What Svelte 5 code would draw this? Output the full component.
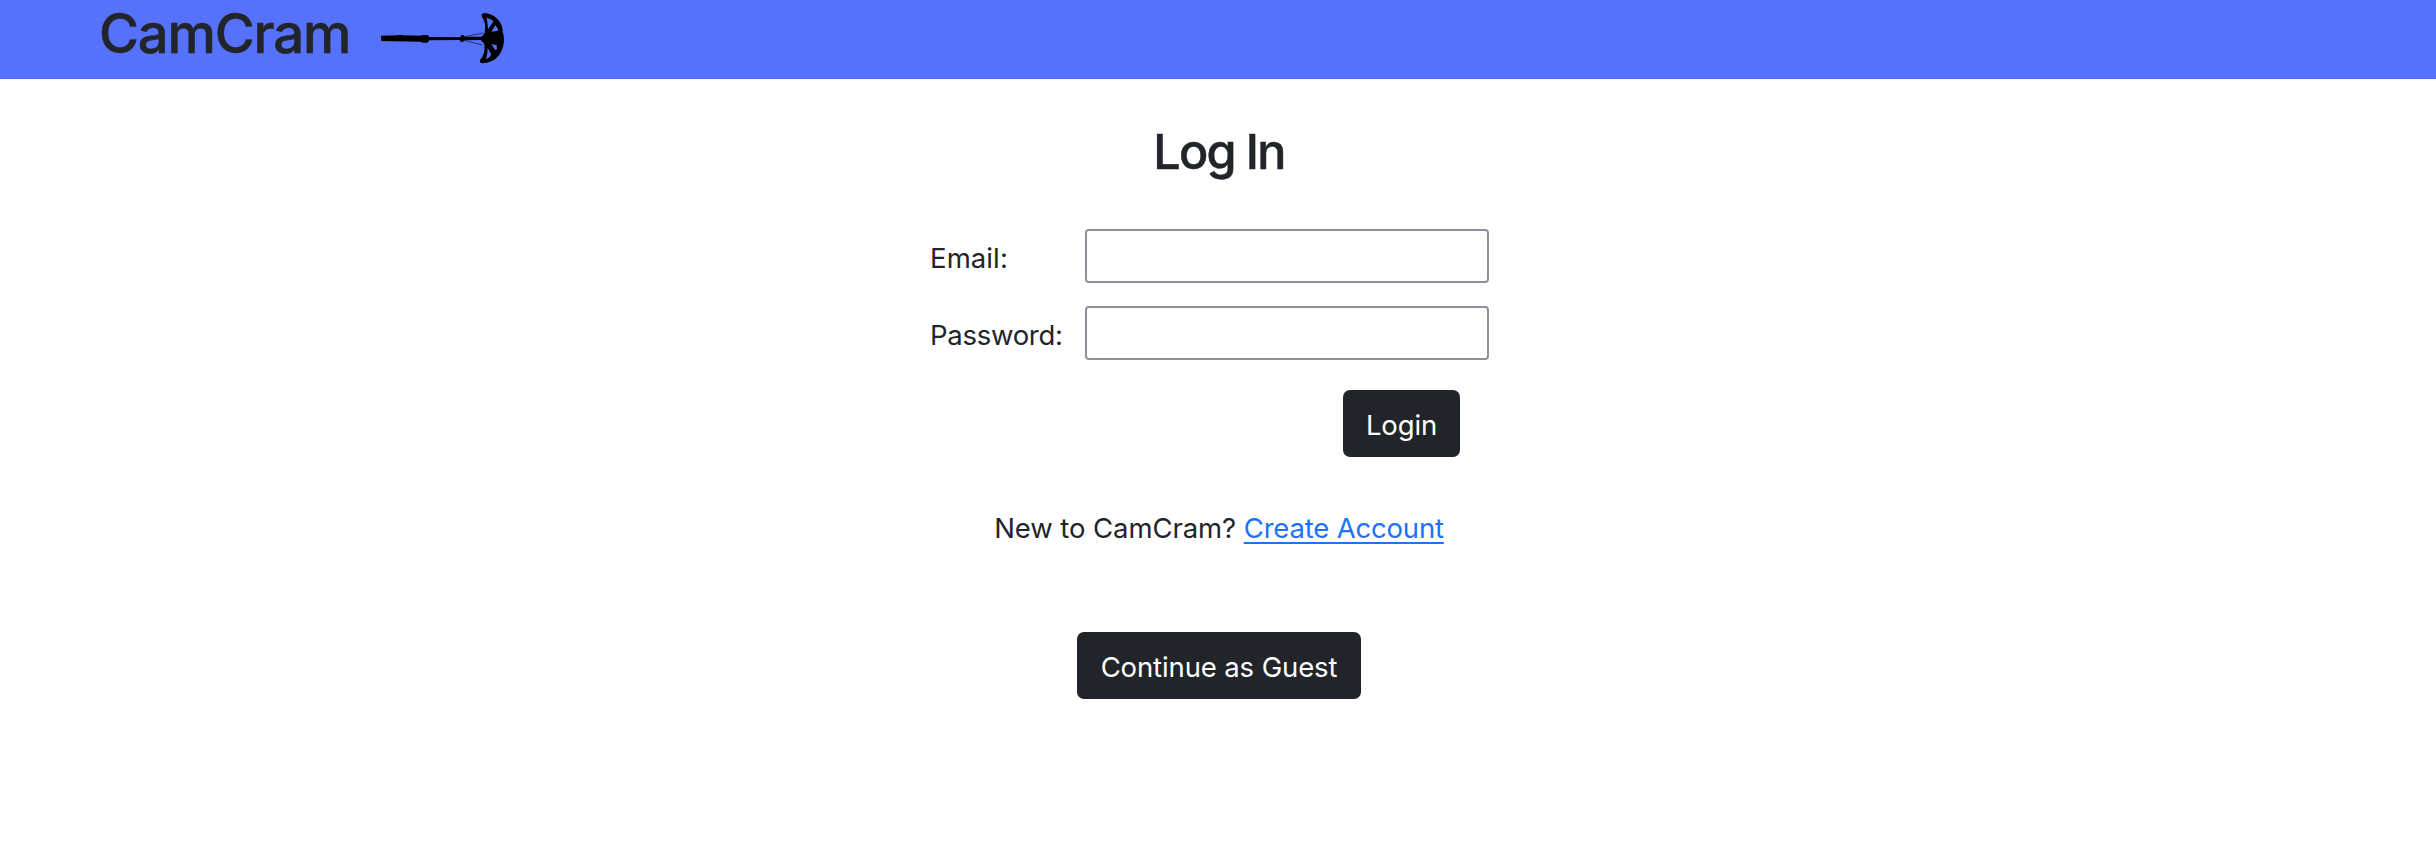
<script>
  let email = $state('');
  let password = $state('');
</script>

<header>
  <span class="brand">CamCram</span>
  <svg class="logo" viewBox="0 0 450 237" aria-hidden="true">
    <path d="M33 107L84 106Q90 103 98 106L151 107Q156 104 164 105L174 106L178 111L270 112Q272 105 279 104L284 110L334 110Q340 106 344 99Q349 68 335 49Q334 39 344 39C376 43 399 66 398 96Q402 105 402 118C402 155 379 190 336 190Q328 188 330 180Q347 162 343 132L332 120L284 121Q281 127 274 126Q269 125 269 120L178 121L174 127Q160 131 152 125L34 123Z" />
    <path d="M283 110L340 99M283 121L337 135" fill="none" stroke="#000" stroke-width="1.7" />
    <g fill="#5672fb">
      <path d="M350 53L366 60Q372 64 367 69L354 88Q353 68 350 53Z" />
      <path d="M376 76Q383 83 385 92L364 95Z" />
      <path d="M364 132L380 136L381 146L376 151Z" />
      <path d="M353 144L363 162Q363 171 348 178Q353 162 353 144Z" />
    </g>
  </svg>
</header>

<main>
  <h1>Log In</h1>
  <form onsubmit={(e) => e.preventDefault()}>
    <label for="email">Email:</label>
    <input id="email" type="email" bind:value={email} />
    <label class="tight" for="password">Password:</label>
    <input id="password" type="password" bind:value={password} />
    <button class="login" type="submit">Login</button>
  </form>
  <p>New to CamCram? <a href="#create">Create Account</a></p>
  <button class="guest" type="button">Continue as Guest</button>
</main>

<style>
  :global(body) {
    margin: 0;
    background: #fff;
    color: #212529;
    font: 400 27.5px/42px Inter, sans-serif;
  }
  header {
    display: flex;
    height: 79px;
    background: #5672fb;
  }
  .brand {
    width: 271px;
    padding-left: 99px;
    font-size: 54.5px;
    font-weight: 500;
    line-height: 67px;
    letter-spacing: -1.18px;
    -webkit-text-stroke: 0.5px #212529;
  }
  .logo {
    width: 150px;
    height: 79px;
  }
  main {
    display: flex;
    flex-direction: column;
    align-items: center;
    padding-left: 2px;
  }
  h1 {
    margin: 43px 0 0;
    font-size: 48.5px;
    line-height: 60px;
    font-weight: 500;
    letter-spacing: -1.78px;
    -webkit-text-stroke: 0.5px #212529;
  }
  form {
    display: grid;
    grid-template-columns: 155px 404px;
    row-gap: 23px;
    width: 578px;
    margin-top: 47px;
    align-items: center;
  }
  label {
    padding-top: 4px;
    letter-spacing: 0.1px;
  }
  .tight {
    letter-spacing: -0.28px;
  }
  input {
    box-sizing: border-box;
    width: 404px;
    height: 54px;
    border: 2px solid #8f8f9d;
    border-radius: 4px;
    background: #fff;
    font: inherit;
  }
  button {
    height: 67px;
    border: 0;
    border-radius: 7px;
    background: #212529;
    color: #fff;
    font: inherit;
    letter-spacing: -0.12px;
    padding: 2px 0 0;
  }
  .login {
    grid-column: 2;
    justify-self: end;
    width: 117px;
    margin: 7px 29px 0 0;
  }
  p {
    margin: 50px 0 0;
    letter-spacing: -0.08px;
  }
  a {
    color: #1a73fb;
    letter-spacing: -0.18px;
    text-decoration-thickness: 2px;
    text-underline-offset: 4px;
  }
  .guest {
    width: 284px;
    margin-top: 83px;
  }
</style>
